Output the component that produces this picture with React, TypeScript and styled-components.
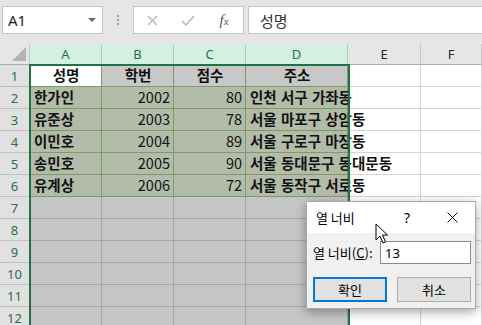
import React from "react";
import styled, { createGlobalStyle } from "styled-components";

const GlobalStyle = createGlobalStyle`
    html, body {
        margin: 0;
        padding: 0;
        overflow: hidden;
        background: #e6e6e6;
    }
    * {
        box-sizing: border-box;
    }
`;

const KR = `"Noto Sans CJK KR", "Noto Sans", sans-serif`;

const Window = styled.div`
    position: relative;
    width: 482px;
    height: 325px;
    overflow: hidden;
    display: flex;
    flex-direction: column;
    font-family: ${KR};
`;

const TopBar = styled.div`
    height: 44px;
    flex: none;
    display: flex;
    align-items: flex-start;
    padding: 6px 0 0 2px;
    background: #e6e6e6;
`;

const NameBox = styled.div`
    width: 101px;
    height: 28px;
    background: #fff;
    border: 1px solid #c6c6c6;
    display: flex;
    align-items: center;
    justify-content: space-between;
    padding: 0 6px 0 5px;
    font-size: 15px;
    color: #222;
    font-family: "Noto Sans", sans-serif;
`;

const DropArrow = styled.span`
    width: 0;
    height: 0;
    border-left: 4px solid transparent;
    border-right: 4px solid transparent;
    border-top: 4px solid #6a6a6a;
`;

const Dots = styled.div`
    width: 30px;
    height: 28px;
    display: flex;
    flex-direction: column;
    align-items: center;
    justify-content: center;
    gap: 2px;
    span {
        width: 2px;
        height: 2px;
        background: #a0a0a0;
    }
`;

const FuncBox = styled.div`
    width: 111px;
    height: 28px;
    background: #fff;
    border: 1px solid #c6c6c6;
    display: flex;
    align-items: center;
`;

const FuncSlot = styled.div`
    width: 36px;
    display: flex;
    justify-content: center;
    align-items: center;
    color: #b4b4b4;
`;

const Fx = styled.span`
    font-family: "Liberation Serif", serif;
    font-style: italic;
    font-size: 15px;
    color: #555;
    sub {
        font-size: 11px;
        vertical-align: 0;
    }
`;

const FormulaInput = styled.div`
    flex: 1;
    margin-left: 4px;
    margin-right: -4px;
    height: 28px;
    background: #fff;
    border: 1px solid #c6c6c6;
    display: flex;
    align-items: center;
    padding-left: 11px;
    font-size: 15px;
    color: #333;
`;

const Sheet = styled.div`
    position: relative;
    flex: 1;
    display: grid;
    grid-template-columns: 30px 72px 72px 72px 102px 73px 61px;
    grid-template-rows: 21px repeat(12, 22px);
    background: #fff;
`;

const Corner = styled.div`
    background: #e6e6e6;
    border-right: 1px solid #c6c6c6;
    border-bottom: 1px solid #ababab;
    position: relative;
    &::after {
        content: "";
        position: absolute;
        right: 3px;
        bottom: 3px;
        width: 0;
        height: 0;
        border-left: 14px solid transparent;
        border-bottom: 14px solid #b4b4b4;
    }
`;

const ColHeader = styled.div<{ $on?: boolean }>`
    background: ${(p) => (p.$on ? "#d3f0e0" : "#e6e6e6")};
    color: ${(p) => (p.$on ? "#217346" : "#262626")};
    border-right: 1px solid ${(p) => (p.$on ? "#9fd5b7" : "#c6c6c6")};
    border-bottom: 1px solid ${(p) => (p.$on ? "#217346" : "#ababab")};
    display: flex;
    align-items: center;
    justify-content: center;
    font-family: "Noto Sans", sans-serif;
    font-size: 13px;
`;

const RowHeader = styled.div`
    background: #e1e1e1;
    color: #217346;
    border-right: 1px solid #9c9c9c;
    border-bottom: 1px solid #c0c0c0;
    display: flex;
    align-items: center;
    justify-content: center;
    font-family: "Noto Sans", sans-serif;
    font-size: 13px;
`;

const Cell = styled.div<{ $bg: string; $line: string; $align: string; $bold?: boolean }>`
    background: ${(p) => p.$bg};
    border-right: 1px solid ${(p) => p.$line};
    border-bottom: 1px solid ${(p) => p.$line};
    display: flex;
    align-items: center;
    justify-content: ${(p) => p.$align};
    padding: 0 3px 0 4px;
    white-space: nowrap;
    font-size: 14.5px;
    font-weight: ${(p) => (p.$bold ? 700 : 400)};
    color: #111;
    min-width: 0;
`;

const CellText = styled.span`
    position: relative;
    z-index: 1;
    line-height: 1;
    word-spacing: 1px;
`;

const Selection = styled.div`
    position: absolute;
    left: 29px;
    top: 20px;
    width: 321px;
    bottom: -4px;
    border: 2px solid #217346;
    border-bottom: none;
    z-index: 2;
    pointer-events: none;
`;

const Dialog = styled.div`
    position: absolute;
    left: 306px;
    top: 201px;
    width: 170px;
    height: 108px;
    border: 1px solid #a9a9a9;
    background: #f0f0f0;
    box-shadow: 0 3px 10px rgba(0, 0, 0, 0.35);
    display: flex;
    flex-direction: column;
    z-index: 5;
    font-family: ${KR};
    color: #000;
`;

const TitleBar = styled.div`
    height: 31px;
    background: #fff;
    display: flex;
    align-items: center;
    padding-left: 9px;
`;

const Title = styled.div`
    flex: 1;
    font-size: 13px;
`;

const Help = styled.div`
    width: 20px;
    margin-right: 13px;
    text-align: center;
    font-family: "Noto Sans", sans-serif;
    font-size: 14px;
`;

const Close = styled.div`
    width: 45px;
    display: flex;
    justify-content: center;
`;

const DialogBody = styled.div`
    display: flex;
    flex-direction: column;
    padding: 8px 4px 0 6px;
`;

const FieldRow = styled.div`
    display: flex;
    align-items: center;
`;

const Label = styled.div`
    width: 67px;
    font-size: 13px;
    u {
        text-decoration: underline;
    }
`;

const Input = styled.div`
    width: 91px;
    height: 23px;
    background: #fff;
    border: 1px solid #8a8a8a;
    display: flex;
    align-items: center;
    padding-left: 4px;
    font-family: "Noto Sans", sans-serif;
    font-size: 13px;
`;

const ButtonRow = styled.div`
    display: flex;
    gap: 10px;
    margin-top: 13px;
`;

const Button = styled.div<{ $primary?: boolean }>`
    width: 74px;
    height: 25px;
    background: #e1e1e1;
    border: ${(p) => (p.$primary ? "2px solid #0078d7" : "1px solid #adadad")};
    display: flex;
    align-items: center;
    justify-content: center;
    font-size: 13px;
`;

const Cursor = styled.svg`
    position: absolute;
    left: 375px;
    top: 223px;
    z-index: 6;
`;

const columns = ["A", "B", "C", "D", "E", "F"];

const data = [
    ["성명", "학번", "점수", "주소"],
    ["한가인", "2002", "80", "인천 서구 가좌동"],
    ["유준상", "2003", "78", "서울 마포구 상암동"],
    ["이민호", "2004", "89", "서울 구로구 마장동"],
    ["송민호", "2005", "90", "서울 동대문구 동대문동"],
    ["유계상", "2006", "72", "서울 동작구 서로동"],
];

function renderRow(r: number) {
    const row = data[r - 1];
    const cells = columns.map((col, c) => {
        const inSel = c < 4;
        let bg = "#fff";
        let line = "#d4d4d4";
        let align = "flex-start";
        let bold = false;
        let text = "";
        if (inSel) {
            bg = "#c6c6c6";
            line = "#a6a6a6";
        }
        if (row && inSel) {
            text = row[c];
            line = "#7d9a6c";
            if (r === 1) {
                bg = c === 0 ? "#fff" : "#c8c8c8";
                align = "center";
                bold = true;
            } else {
                bg = "#b2bca9";
                align = c === 1 || c === 2 ? "flex-end" : "flex-start";
                bold = c === 0 || c === 3;
            }
        }
        return (
            <Cell key={col + r} $bg={bg} $line={line} $align={align} $bold={bold}>
                {text && <CellText>{text}</CellText>}
            </Cell>
        );
    });
    return (
        <React.Fragment key={"row" + r}>
            <RowHeader>{r}</RowHeader>
            {cells}
        </React.Fragment>
    );
}

export default function App() {
    const rows = Array.from({ length: 12 }, (_, i) => i + 1);
    return (
        <Window>
            <GlobalStyle />
            <TopBar>
                <NameBox>
                    <span>A1</span>
                    <DropArrow />
                </NameBox>
                <Dots>
                    <span />
                    <span />
                    <span />
                </Dots>
                <FuncBox>
                    <FuncSlot>
                        <svg width="11" height="11" viewBox="0 0 11 11">
                            <path d="M1 1 L10 10 M10 1 L1 10" stroke="#b8b8b8" strokeWidth="1.3" />
                        </svg>
                    </FuncSlot>
                    <FuncSlot>
                        <svg width="14" height="11" viewBox="0 0 14 11">
                            <path d="M1 6 L5 10 L13 1" stroke="#b8b8b8" strokeWidth="1.6" fill="none" />
                        </svg>
                    </FuncSlot>
                    <FuncSlot>
                        <Fx>
                            f<sub>x</sub>
                        </Fx>
                    </FuncSlot>
                </FuncBox>
                <FormulaInput>성명</FormulaInput>
            </TopBar>
            <Sheet>
                <Corner />
                {columns.map((col, i) => (
                    <ColHeader key={col} $on={i < 4}>
                        {col}
                    </ColHeader>
                ))}
                {rows.map((r) => renderRow(r))}
                <Selection />
            </Sheet>
            <Dialog>
                <TitleBar>
                    <Title>열 너비</Title>
                    <Help>?</Help>
                    <Close>
                        <svg width="11" height="11" viewBox="0 0 11 11">
                            <path d="M0.5 0.5 L10.5 10.5 M10.5 0.5 L0.5 10.5" stroke="#111" strokeWidth="1" />
                        </svg>
                    </Close>
                </TitleBar>
                <DialogBody>
                    <FieldRow>
                        <Label>
                            열 너비(<u>C</u>):
                        </Label>
                        <Input>13</Input>
                    </FieldRow>
                    <ButtonRow>
                        <Button $primary>확인</Button>
                        <Button>취소</Button>
                    </ButtonRow>
                </DialogBody>
            </Dialog>
            <Cursor width="14" height="22" viewBox="0 0 14 22">
                <path
                    d="M1 1 L1 17 L5 13 L8 20 L10.5 19 L7.5 12 L12.5 12 Z"
                    fill="#fff"
                    stroke="#000"
                    strokeWidth="1"
                    strokeLinejoin="round"
                />
            </Cursor>
        </Window>
    );
}
